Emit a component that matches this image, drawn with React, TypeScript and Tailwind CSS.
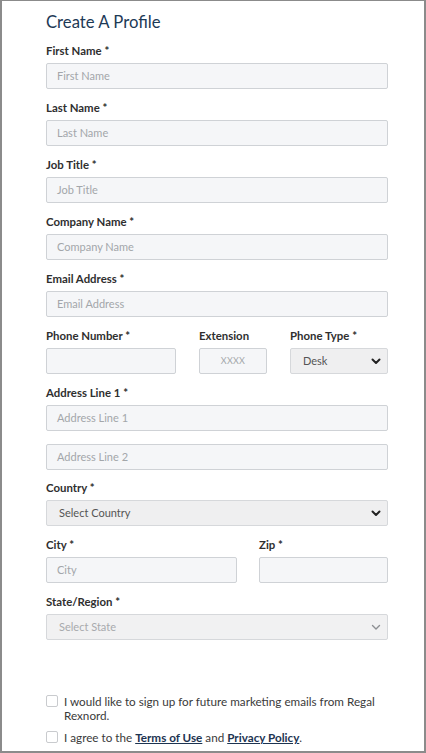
const font = { fontFamily: "Lato, 'Noto Sans', sans-serif" };

function Label({ text, required = true }: { text: string; required?: boolean }) {
  return (
    <div className="h-[14px] text-[11.4px] leading-[14px] font-bold text-[#2f2f2f] mb-[5px]">
      {text}
      {required && " *"}
    </div>
  );
}

function Input({ placeholder = "", small = false }: { placeholder?: string; small?: boolean }) {
  return (
    <div
      className={`h-[26px] w-full flex items-center bg-[#f5f6f8] border border-[#cfd2d6] rounded-[2px] ${
        small ? "justify-center text-[9px] tracking-wide" : "pl-[10px] text-[11px]"
      } text-[#a3a6aa]`}
    >
      {placeholder}
    </div>
  );
}

function Chevron({ light = false }: { light?: boolean }) {
  return (
    <svg width="10" height="7" viewBox="0 0 10 7" className="mr-[6px]">
      <path
        d="M1.5 1.5 L5 5 L8.5 1.5"
        fill="none"
        stroke={light ? "#8d8f93" : "#222"}
        strokeWidth={light ? 1.4 : 2}
        strokeLinecap="round"
        strokeLinejoin="round"
      />
    </svg>
  );
}

function Select({ value, light = false }: { value: string; light?: boolean }) {
  return (
    <div
      className={`h-[26px] w-full flex items-center justify-between pl-[12px] border border-[#d6d8db] rounded-[2px] text-[11px] ${
        light ? "bg-[#f1f1f2] text-[#a8aaad]" : "bg-[#efeff0] text-[#555]"
      }`}
    >
      <span>{value}</span>
      <Chevron light={light} />
    </div>
  );
}

function Field({ label, placeholder }: { label: string; placeholder: string }) {
  return (
    <div className="mb-[12px]">
      <Label text={label} />
      <Input placeholder={placeholder} />
    </div>
  );
}

function Checkbox() {
  return (
    <div className="w-[12px] h-[12px] shrink-0 mt-[1px] border border-[#c9cbce] rounded-[2px] bg-white" />
  );
}

export default function App() {
  return (
    <div style={font} className="w-[426px] h-[753px] bg-white border-2 border-t border-[#8b8b8b]">
      <div className="pl-[44px] pr-[36px] pt-[11px]">
        <h1 className="text-[16.7px] leading-[20px] text-[#1d3a56] mb-[12px]">Create A Profile</h1>

        <Field label="First Name" placeholder="First Name" />
        <Field label="Last Name" placeholder="Last Name" />
        <Field label="Job Title" placeholder="Job Title" />
        <Field label="Company Name" placeholder="Company Name" />
        <Field label="Email Address" placeholder="Email Address" />

        <div className="flex gap-[23px] mb-[12px]">
          <div className="w-[130px]">
            <Label text="Phone Number" />
            <Input />
          </div>
          <div className="w-[68px]">
            <Label text="Extension" required={false} />
            <Input placeholder="XXXX" small />
          </div>
          <div className="flex-1">
            <Label text="Phone Type" />
            <Select value="Desk" />
          </div>
        </div>

        <div className="mb-[13px]">
          <Label text="Address Line 1" />
          <Input placeholder="Address Line 1" />
        </div>
        <div className="mb-[11px]">
          <Input placeholder="Address Line 2" />
        </div>

        <div className="mb-[12px]">
          <Label text="Country" />
          <Select value="Select Country" />
        </div>

        <div className="flex gap-[22px] mb-[12px]">
          <div className="w-[191px]">
            <Label text="City" />
            <Input placeholder="City" />
          </div>
          <div className="flex-1">
            <Label text="Zip" />
            <Input />
          </div>
        </div>

        <div className="mb-[54px]">
          <Label text="State/Region" />
          <Select value="Select State" light />
        </div>

        <div className="flex gap-[6px] text-[11.7px] leading-[14px] text-[#3a3a3a] mb-[8px]">
          <Checkbox />
          <p>I would like to sign up for future marketing emails from Regal Rexnord.</p>
        </div>
        <div className="flex gap-[6px] text-[11.7px] leading-[14px] text-[#3a3a3a]">
          <Checkbox />
          <p>
            I agree to the{" "}
            <span className="underline font-bold text-[#1d3451]">Terms of Use</span> and{" "}
            <span className="underline font-bold text-[#1d3451]">Privacy Policy</span>.
          </p>
        </div>
      </div>
    </div>
  );
}
